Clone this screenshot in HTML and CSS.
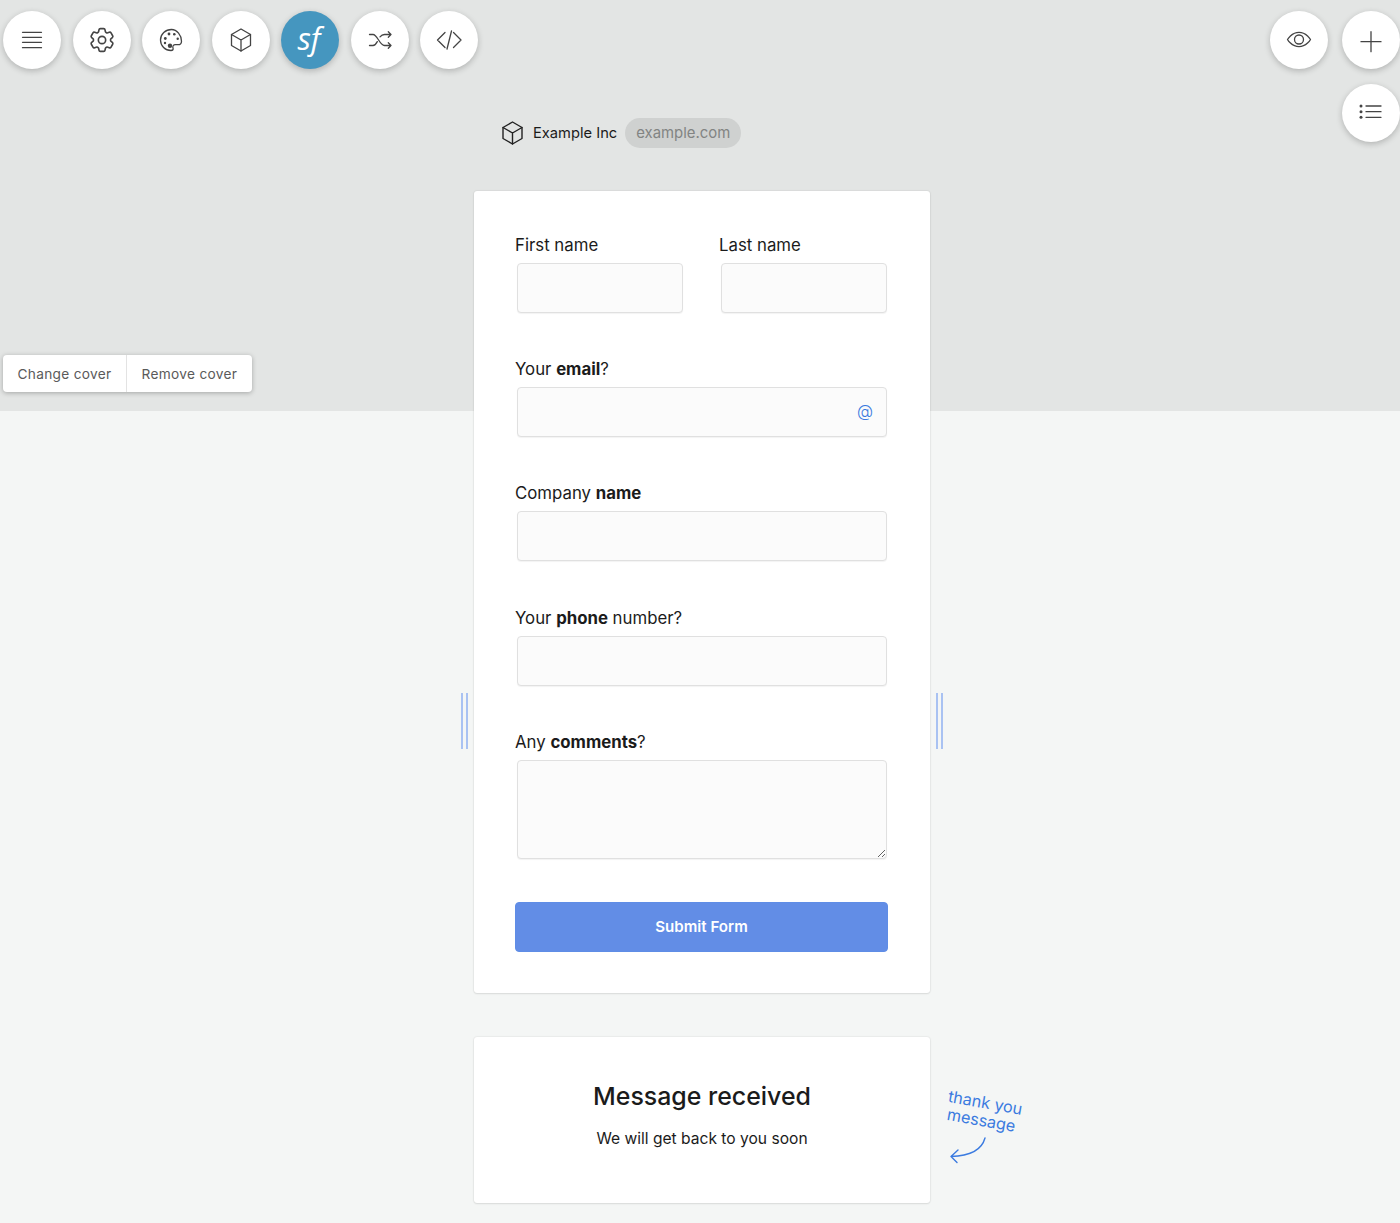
FILE: index.html
```html
<!DOCTYPE html>
<html lang="en">
<head>
<meta charset="utf-8">
<title>Contact form</title>
<link rel="stylesheet" href="styles.css">
</head>
<body>
<div class="page">
  <div class="toolbar">
    <div class="tool-group">
      <button class="tool" aria-label="Menu"><svg class="icon" viewBox="0 0 24 24"><path d="M2.500 4.300h19M2.500 9.300h19M2.500 14.300h19M2.500 19.700h19"/></svg></button>
      <button class="tool" aria-label="Settings"><svg class="icon" viewBox="2.500 2.500 19 19"><circle cx="12" cy="12" r="2.900"/><path d="M9.594 3.940c.09-.542.56-.94 1.110-.94h2.593c.55 0 1.020.398 1.110.94l.213 1.281c.063.374.313.686.645.870.074.04.147.083.22.127.325.196.72.257 1.075.124l1.217-.456a1.125 1.125 0 0 1 1.370.49l1.296 2.247a1.125 1.125 0 0 1-.26 1.431l-1.003.827c-.293.241-.438.613-.43.992a7.723 7.723 0 0 1 0 .255c-.008.378.137.75.43.991l1.004.827c.424.35.534.955.26 1.430l-1.298 2.247a1.125 1.125 0 0 1-1.369.491l-1.217-.456c-.355-.133-.75-.072-1.076.124a6.470 6.470 0 0 1-.22.128c-.331.183-.581.495-.644.869l-.213 1.281c-.09.543-.56.94-1.110.94h-2.594c-.55 0-1.019-.398-1.110-.94l-.213-1.281c-.062-.374-.312-.686-.644-.87a6.520 6.520 0 0 1-.22-.127c-.325-.196-.72-.257-1.076-.124l-1.217.456a1.125 1.125 0 0 1-1.369-.49l-1.297-2.247a1.125 1.125 0 0 1 .26-1.431l1.004-.827c.292-.24.437-.613.43-.991a6.932 6.932 0 0 1 0-.255c.007-.38-.138-.751-.43-.992l-1.004-.827a1.125 1.125 0 0 1-.26-1.430l1.297-2.247a1.125 1.125 0 0 1 1.370-.491l1.216.456c.356.133.751.072 1.076-.124.072-.044.146-.086.22-.128.332-.183.582-.495.644-.869l.214-1.280z"/></svg></button>
      <button class="tool" aria-label="Palette"><svg class="icon" viewBox="0 0 24 24"><path d="M12.500 1.500C6.500 1.500 1.500 6 1.500 12s4.700 10.500 10.500 10.500c1.900 0 2.500-1.200 2-2.400-.7-1.700.4-3.400 2.300-3.400h2.700c2 0 3.500-1.600 3.500-3.500 0-6-4.500-11.700-10-11.700z"/><circle class="dot" cx="6.300" cy="10.500" r="1.400"/><circle class="dot" cx="6" cy="15" r="1.200"/><circle class="dot" cx="10" cy="6" r="1.400"/><circle class="dot" cx="15.300" cy="6.300" r="1.300"/><circle class="dot" cx="18.700" cy="10.800" r="1.200"/><circle class="dot" cx="11" cy="17.800" r="2.200"/></svg></button>
      <button class="tool" aria-label="Blocks"><svg class="icon" viewBox="0 0 24 24"><path d="M12 1l9.500 5.500v11L12 23l-9.500-5.500v-11z"/><path d="M2.500 6.500L12 12l9.500-5.500M12 12v11"/></svg></button>
      <button class="tool tool-sf" aria-label="Salesforce"><span class="sf">sf</span></button>
      <button class="tool" aria-label="Shuffle"><svg class="icon" viewBox="0 0 24 24"><path d="M1.500 6.500h3.500c4.500 0 6.500 11 11.500 11H23M1.500 17.500H5c1.800 0 3.200-1.800 4.300-3.900M12 8.800c1.200-1.400 2.600-2.300 4.500-2.300H23M20.300 3.800l2.700 2.700-2.700 2.700M20.300 14.800l2.700 2.700-2.700 2.700"/></svg></button>
      <button class="tool" aria-label="Code"><svg class="icon" viewBox="0 0 24 24"><path d="M8 4.500L.5 12 8 19.500M16.500 4.500L24 12l-7.500 7.500M14.500 3L10 21"/></svg></button>
    </div>
    <div class="tool-side">
      <button class="tool" aria-label="Preview"><svg class="icon" viewBox="0 0 24 24"><path d="M.5 11.500S4.500 4.300 12 4.300s11.500 7.200 11.500 7.200-4 7.200-11.500 7.200S.5 11.500.5 11.500z"/><circle cx="12" cy="11.500" r="4.500"/></svg></button>
      <button class="tool" aria-label="Add"><svg class="icon" viewBox="0 0 24 24"><path d="M12 3.700v20M2 13.700h20"/></svg></button>
      <button class="tool tool-list" aria-label="Outline"><svg class="icon" viewBox="0 0 24 24"><path d="M7 5h15M7 10.700h15M7 16.300h15"/><circle class="dot" cx="2" cy="5" r="1.500"/><circle class="dot" cx="2" cy="10.700" r="1.500"/><circle class="dot" cx="2" cy="16.300" r="1.500"/></svg></button>
    </div>
  </div>

  <div class="cover-actions">
    <button class="cover-btn">Change cover</button>
    <button class="cover-btn">Remove cover</button>
  </div>

  <main class="column">
    <div class="brand">
      <svg class="brand-icon" viewBox="1.500 1 21 22"><path d="M12 1l9.500 5.500v11L12 23l-9.500-5.500v-11z"/><path d="M2.500 6.500L12 12l9.500-5.500M12 12v11"/></svg>
      <span class="brand-name">Example Inc</span>
      <span class="brand-domain">example.com</span>
    </div>

    <section class="card form-card">
      <span class="handle handle-left"></span>
      <span class="handle handle-right"></span>
      <form class="form">
        <div class="name-row">
          <div class="field">
            <label class="label">First name</label>
            <input class="input" type="text">
          </div>
          <div class="field">
            <label class="label">Last name</label>
            <input class="input" type="text">
          </div>
        </div>
        <div class="field">
          <label class="label">Your <b>email</b>?</label>
          <div class="input-wrap">
            <input class="input" type="text">
            <span class="at">@</span>
          </div>
        </div>
        <div class="field">
          <label class="label">Company <b>name</b></label>
          <input class="input" type="text">
        </div>
        <div class="field">
          <label class="label">Your <b>phone</b> number?</label>
          <input class="input" type="text">
        </div>
        <div class="field">
          <label class="label">Any <b>comments</b>?</label>
          <textarea class="input textarea"></textarea>
        </div>
        <button class="submit" type="button">Submit Form</button>
      </form>
    </section>

    <section class="card thanks-card">
      <h2 class="thanks-title">Message received</h2>
      <p class="thanks-text">We will get back to you soon</p>
      <div class="note">
        <p class="note-text"><span class="note-line">thank you</span><span class="note-line note-line-second">message</span></p>
        <svg class="note-arrow" viewBox="0 0 37 27"><path d="M36 1C33 12 22 19 2 19.500M9 13l-7 6.500 6 6"/></svg>
      </div>
    </section>
  </main>
</div>
</body>
</html>
```
FILE: styles.css
```css
* { box-sizing: border-box; }
html, body { margin: 0; padding: 0; }
body { font-family: Inter, "Liberation Sans", sans-serif; color: #1b1b1b; }
button { font-family: inherit; }

.page {
  position: relative;
  height: 1223px;
  overflow: hidden;
  background: linear-gradient(#e3e5e4 411px, #f4f6f5 411px);
}

.toolbar {
  position: absolute;
  top: 11px;
  left: 3px;
  right: 0;
  display: flex;
  justify-content: space-between;
  align-items: flex-start;
}
.tool-group { display: flex; gap: 11.500px; }
.tool-side { display: grid; grid-template-columns: 58px 58px; column-gap: 14px; row-gap: 15px; }
.tool-list { grid-column: 2; }
.tool {
  width: 58px;
  height: 58px;
  padding: 0;
  border: 0;
  border-radius: 50%;
  background: #fff;
  box-shadow: 0 2px 6px rgba(0, 0, 0, .22);
  display: flex;
  align-items: center;
  justify-content: center;
}
.tool-sf { background: #4596bf; }
.sf {
  font: italic 500 31px/1 "Open Sans", sans-serif;
  color: #fff;
  position: relative;
  top: -2px;
  left: -1px;
}
.icon { width: 24px; height: 24px; overflow: visible; fill: none; stroke: #444; stroke-width: 1.300; stroke-linecap: round; stroke-linejoin: round; }
.icon .dot { fill: #444; stroke: none; }

.cover-actions {
  position: absolute;
  top: 355px;
  left: 3px;
  display: flex;
  background: #fff;
  border-radius: 4px;
  box-shadow: 0 1px 5px rgba(0, 0, 0, .28);
}
.cover-btn {
  height: 37px;
  padding: 0 14.500px;
  border: 0;
  background: none;
  font-size: 13.700px;
  letter-spacing: .3px;
  color: #5a5a5a;
}
.cover-btn + .cover-btn { border-left: 1px solid #e3e3e3; }

.column {
  width: 456px;
  margin-left: 474px;
  padding-top: 118px;
}
.brand {
  display: flex;
  align-items: center;
  height: 30px;
  margin-bottom: 43px;
  padding-left: 28px;
}
.brand-icon { width: 21px; height: 22px; overflow: visible; fill: none; stroke: #222; stroke-width: 1.400; stroke-linecap: round; stroke-linejoin: round; }
.brand-name { margin-left: 10px; font-size: 14.700px; line-height: 28px; color: #1b1b1b; }
.brand-domain {
  margin-left: 8px;
  height: 30px;
  line-height: 30px;
  padding: 0 11px;
  border-radius: 15px;
  background: #cfd1d0;
  font-size: 14.900px;
  color: #828483;
}

.card {
  position: relative;
  background: #fff;
  border-radius: 3px;
  box-shadow: 0 0 2px rgba(0, 0, 0, .14), 0 1px 2px rgba(0, 0, 0, .08);
}
.form-card { height: 802px; }
.handle {
  position: absolute;
  top: 502px;
  width: 7px;
  height: 56px;
  border-left: 2.500px solid #a9c2f2;
  border-right: 2.500px solid #a9c2f2;
}
.handle-left { left: -13px; }
.handle-right { right: -13px; }

.form { padding: 44px 41px 0; display: flex; flex-direction: column; gap: 46.200px; }
.name-row { display: grid; grid-template-columns: 170px 170px; column-gap: 34px; }
.field { display: flex; flex-direction: column; }
.label { display: block; height: 20px; line-height: 20px; font-size: 16.800px; margin-bottom: 8px; color: #1b1b1b; }
.label b { font-weight: 700; }
.input {
  display: block;
  width: calc(100% - 4px);
  height: 50px;
  margin: 0 2px;
  border: 1px solid #e0e0e0;
  border-radius: 4px;
  background: #fbfbfb;
  box-shadow: 0 1px 1px rgba(0, 0, 0, .05);
  outline: 0;
}
.input-wrap { position: relative; }
.at {
  position: absolute;
  right: 16px;
  top: 14px;
  font-size: 16.500px;
  font-weight: 300;
  line-height: 20px;
  color: #3b7be0;
}
.textarea { height: 99px; resize: both; }
.submit {
  width: 373px;
  height: 50px;
  border: 1px solid #5f8de6;
  border-radius: 4px;
  background: #628de6;
  color: #fff;
  font-size: 15.100px;
  font-weight: 600;
  margin-top: -3px;
}

.thanks-card { height: 166px; margin-top: 44px; text-align: center; padding-top: 43px; }
.thanks-title { margin: 0; font-size: 24.900px; line-height: 32px; font-weight: 500; color: #1b1b1b; }
.thanks-text { margin: 17px 0 0; font-size: 15.600px; line-height: 20px; color: #1b1b1b; }
.note {
  position: absolute;
  left: 476px;
  top: 50px;
  width: 90px;
}
.note-text {
  margin: 0;
  font-size: 16.200px;
  line-height: 18px;
  text-align: left;
  color: #3b7be0;
  transform: rotate(10deg);
  transform-origin: 0 0;
}
.note-line { display: block; white-space: nowrap; }
.note-line-second { margin-left: 2px; }
.note-arrow {
  display: block;
  width: 37px;
  height: 27px;
  margin: 14px 0 0 -1px;
  overflow: visible;
  fill: none;
  stroke: #3b7be0;
  stroke-width: 1.400;
  stroke-linecap: round;
  stroke-linejoin: round;
}
```
